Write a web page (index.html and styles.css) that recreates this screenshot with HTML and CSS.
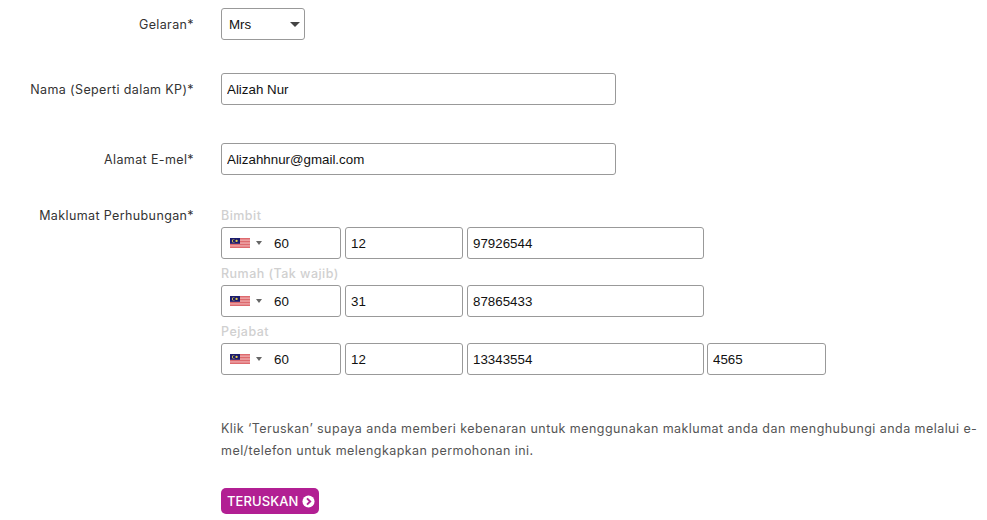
FILE: index.html
```html
<!DOCTYPE html>
<html lang="ms">
<head>
    <meta charset="UTF-8">
    <meta name="viewport" content="width=device-width, initial-scale=1.0">
    <title>Permohonan</title>
    <link rel="stylesheet" href="styles.css">
</head>
<body>
    <form class="form">
        <div class="row row-title">
            <label class="label">Gelaran*</label>
            <div class="selectWrap">
                <select class="select">
                    <option>Mrs</option>
                    <option>Mr</option>
                    <option>Ms</option>
                </select>
            </div>
        </div>
        <div class="row row-name">
            <label class="label">Nama (Seperti dalam KP)*</label>
            <input type="text" class="input wide" value="Alizah Nur">
        </div>
        <div class="row row-email">
            <label class="label">Alamat E-mel*</label>
            <input type="text" class="input wide" value="Alizahhnur@gmail.com">
        </div>
        <div class="row row-contact">
            <label class="label">Maklumat Perhubungan*</label>
            <div class="phones">
                <div class="phoneTitle">Bimbit</div>
                <div class="phoneRow">
                    <div class="code">
                        <svg class="flag" viewBox="0 0 20 10"><use href="#my"/></svg>
                        <span class="caret"></span>
                        <input type="text" class="input codeInput" value="60">
                    </div>
                    <input type="text" class="input area" value="12">
                    <input type="text" class="input number" value="97926544">
                </div>
                <div class="phoneTitle">Rumah (Tak wajib)</div>
                <div class="phoneRow">
                    <div class="code">
                        <svg class="flag" viewBox="0 0 20 10"><use href="#my"/></svg>
                        <span class="caret"></span>
                        <input type="text" class="input codeInput" value="60">
                    </div>
                    <input type="text" class="input area" value="31">
                    <input type="text" class="input number" value="87865433">
                </div>
                <div class="phoneTitle">Pejabat</div>
                <div class="phoneRow">
                    <div class="code">
                        <svg class="flag" viewBox="0 0 20 10"><use href="#my"/></svg>
                        <span class="caret"></span>
                        <input type="text" class="input codeInput" value="60">
                    </div>
                    <input type="text" class="input area" value="12">
                    <input type="text" class="input number" value="13343554">
                    <input type="text" class="input ext" value="4565">
                </div>
            </div>
        </div>
        <p class="note">Klik ‘Teruskan’ supaya anda memberi kebenaran untuk menggunakan maklumat anda dan menghubungi anda melalui e-mel/telefon untuk melengkapkan permohonan ini.</p>
        <button type="button" class="btn">TERUSKAN
            <svg class="btnIcon" viewBox="0 0 14 14">
                <circle cx="7" cy="7" r="6.5" fill="#fff"/>
                <path d="M5.4 3.6 8.8 7l-3.4 3.4" fill="none" stroke="#b21f93" stroke-width="2.1"/>
            </svg>
        </button>
    </form>

    <!-- flag used by the three phone rows -->
    <svg class="defs" width="0" height="0">
        <symbol id="my" viewBox="0 0 20 10">
            <rect width="20" height="10" fill="#eea6a8"/>
            <rect y="0" width="20" height="1.4" fill="#dd6a6e"/>
            <rect y="2.9" width="20" height="1.4" fill="#dd6a6e"/>
            <rect y="5.8" width="20" height="1.4" fill="#dd6a6e"/>
            <rect y="8.6" width="20" height="1.4" fill="#dd6a6e"/>
            <rect width="10" height="5.8" fill="#1c1c6e"/>
            <circle cx="3.6" cy="2.9" r="1.7" fill="#e8d24a"/>
            <circle cx="4.2" cy="2.9" r="1.4" fill="#1c1c6e"/>
            <circle cx="6.6" cy="2.9" r="1.1" fill="#e8d24a"/>
        </symbol>
    </svg>
</body>
</html>
```

FILE: styles.css
```css
html, body{
    margin: 0;
    padding: 0;
    background-color: #fff;
}
body{
    font-family: Inter, "Liberation Sans", sans-serif;
    overflow: hidden;
}
.form{
    width: 987px;
    padding-top: 8px;
    box-sizing: border-box;
}
.row{
    display: flex;
    align-items: flex-start;
}
.row-title{
    margin-bottom: 33px;
}
.row-name{
    margin-bottom: 38px;
}
.row-email{
    margin-bottom: 32px;
}
.label{
    width: 194px;
    height: 32px;
    margin-right: 27px;
    flex: none;
    text-align: right;
    font-size: 12.5px;
    line-height: 33px;
    letter-spacing: 0.38px;
    color: #333;
}
.row-contact .label{
    line-height: 18px;
}
.input{
    box-sizing: border-box;
    height: 32px;
    padding: 0 5px;
    border: 1px solid #999;
    border-radius: 3px;
    background-color: #fff;
    font-family: "Liberation Sans", Arial, sans-serif;
    font-size: 13.33px;
    color: #111;
    outline: none;
}
.wide{
    width: 395px;
}
.selectWrap{
    position: relative;
    width: 84px;
    height: 32px;
}
.selectWrap::after{
    content: "";
    position: absolute;
    left: 69px;
    top: 14px;
    border-style: solid;
    border-width: 5px 5px 0 5px;
    border-color: #444 transparent transparent transparent;
    pointer-events: none;
}
.select{
    appearance: none;
    box-sizing: border-box;
    width: 84px;
    height: 32px;
    padding: 0 7px;
    border: 1px solid #999;
    border-radius: 3px;
    background-color: #fff;
    font-family: "Liberation Sans", Arial, sans-serif;
    font-size: 13.33px;
    color: #111;
}
.phones{
    flex: none;
    padding-top: 2px;
}
.phoneTitle{
    height: 18px;
    font-size: 12.5px;
    line-height: 14px;
    letter-spacing: 0.47px;
    font-weight: 500;
    color: #d0d0d0;
}
.phoneRow{
    display: flex;
    gap: 4px;
    margin-bottom: 8px;
}
.code{
    position: relative;
    width: 120px;
    height: 32px;
}
.codeInput{
    width: 120px;
    padding-left: 52px;
}
.flag{
    position: absolute;
    left: 9px;
    top: 11px;
    width: 20px;
    height: 10px;
}
.caret{
    position: absolute;
    left: 35px;
    top: 14px;
    border-style: solid;
    border-width: 4px 3px 0 3px;
    border-color: #666 transparent transparent transparent;
}
.area{
    width: 118px;
}
.number{
    width: 237px;
}
.ext{
    width: 119px;
    margin-left: -1px;
}
.note{
    width: 766px;
    margin: 35px 0 0 221px;
    font-size: 12.5px;
    line-height: 22px;
    letter-spacing: 0.445px;
    color: #555;
}
.btn{
    display: flex;
    align-items: center;
    gap: 3px;
    box-sizing: border-box;
    width: 98px;
    height: 26px;
    margin: 26px 0 0 221px;
    padding: 0 0 0 6px;
    border: none;
    border-radius: 5px;
    background-color: #b21f93;
    font-family: Inter, "Liberation Sans", sans-serif;
    font-size: 13px;
    font-weight: 500;
    letter-spacing: 0.1px;
    color: #fff;
    white-space: nowrap;
}
.btnIcon{
    width: 13px;
    height: 13px;
    flex: none;
}
.defs{
    position: absolute;
}
```
